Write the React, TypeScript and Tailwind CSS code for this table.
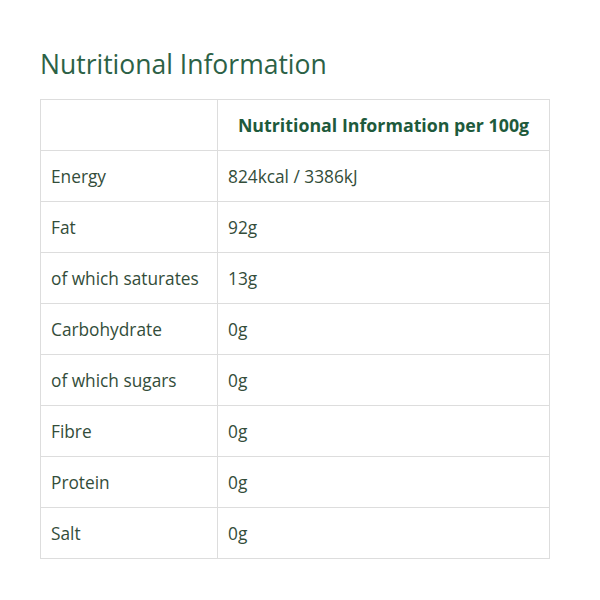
const rows: [string, string][] = [
  ["Energy", "824kcal / 3386kJ"],
  ["Fat", "92g"],
  ["of which saturates", "13g"],
  ["Carbohydrate", "0g"],
  ["of which sugars", "0g"],
  ["Fibre", "0g"],
  ["Protein", "0g"],
  ["Salt", "0g"],
];

export default function App() {
  return (
    <div className="min-h-[600px] w-[600px] bg-white px-10 pt-[44px] font-['Open_Sans',sans-serif]">
      <h2 className="text-[26.5px] leading-[40px] font-normal text-[#2c6146]">Nutritional Information</h2>
      <table className="mt-[15px] w-[510px] border-collapse text-[17.3px] text-[#334d3a]">
        <thead>
          <tr className="h-[51px]">
            <th className="w-[177px] border border-[#dddddd]" />
            <th className="border border-[#dddddd] pt-[1px] text-center text-[17.8px] font-bold text-[#1e5a3c]">
              Nutritional Information per 100g
            </th>
          </tr>
        </thead>
        <tbody>
          {rows.map(([label, value]) => (
            <tr key={label} className="h-[51px]">
              <td className="border border-[#dddddd] px-[10px] pt-[2px]">{label}</td>
              <td className="border border-[#dddddd] px-[10px] pt-[2px]">{value}</td>
            </tr>
          ))}
        </tbody>
      </table>
    </div>
  );
}
